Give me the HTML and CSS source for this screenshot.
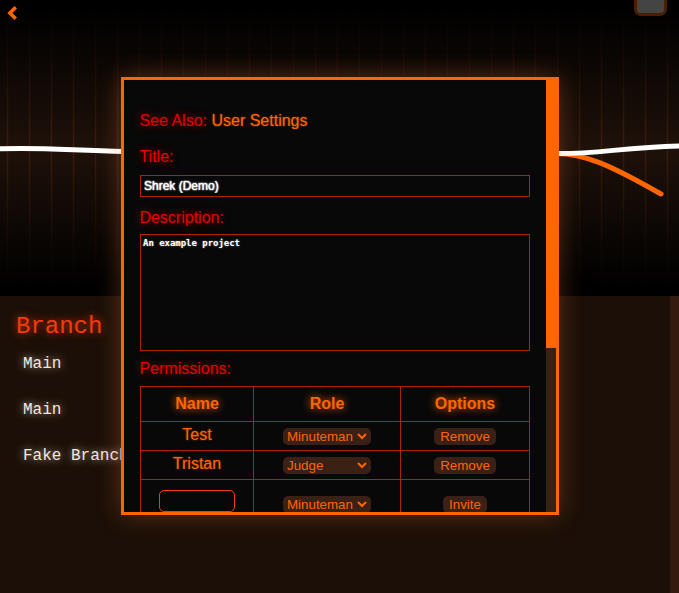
FILE: index.html
```html
<!DOCTYPE html>
<html lang="en">
<head>
<meta charset="utf-8">
<title>Project Settings</title>
<link rel="stylesheet" href="styles.css">
</head>
<body>
<main class="page">
  <section class="timeline">
    <svg class="tracks" width="679" height="296" viewBox="0 0 679 296" fill="none" stroke-linecap="round">
      <path d="M555 153.500C585 153.500 610 165 661 194" stroke="#f60" stroke-width="5"/>
      <path d="M-3 149C35 147 65 150 125 151.500M555 153.500C595 154.500 625 147 682 146" stroke="#fff" stroke-width="5"/>
    </svg>
    <svg class="back" width="12" height="16" viewBox="0 0 12 16" fill="none"><path d="M9.700 2.200 3.900 8l5.800 5.800" stroke="#f60" stroke-width="3.600"/></svg>
    <div class="avatar"></div>
  </section>
  <section class="branches">
    <h2>Branch</h2>
    <p>Main</p>
    <p>Main</p>
    <p>Fake Branch</p>
  </section>
</main>
<div class="dialog">
  <div class="content">
    <p class="label see">See Also: <a>User Settings</a></p>
    <label class="label">Title:</label>
    <input class="title" value="Shrek (Demo)">
    <label class="label desc">Description:</label>
    <textarea class="text" spellcheck="false">An example project</textarea>
    <label class="label perm">Permissions:</label>
    <div class="grid">
      <div class="cell head">Name</div><div class="cell head">Role</div><div class="cell head">Options</div>
      <div class="cell">Test</div>
      <div class="cell"><span class="select">Minuteman<svg width="10" height="7" viewBox="0 0 10 7"><path d="m1 1 4 4 4-4"/></svg></span></div>
      <div class="cell"><button>Remove</button></div>
      <div class="cell">Tristan</div>
      <div class="cell"><span class="select">Judge<svg width="10" height="7" viewBox="0 0 10 7"><path d="m1 1 4 4 4-4"/></svg></span></div>
      <div class="cell"><button>Remove</button></div>
      <div class="cell last"><input class="invite"></div>
      <div class="cell last"><span class="select">Minuteman<svg width="10" height="7" viewBox="0 0 10 7"><path d="m1 1 4 4 4-4"/></svg></span></div>
      <div class="cell last"><button>Invite</button></div>
    </div>
  </div>
  <div class="scrollbar"><div class="thumb"></div></div>
</div>
</body>
</html>
```
FILE: styles.css
```css
* { box-sizing: border-box; }
body {
  margin: 0;
  height: 593px;
  overflow: hidden;
  background: #1b0f07;
  font: 16px/18px "Liberation Sans", Arial, sans-serif;
}
p, h2 { margin: 0; }
.page { height: 593px; display: flex; flex-direction: column; }
.timeline {
  position: relative;
  height: 296px;
  flex: none;
  background:
    linear-gradient(#000 3%, transparent 50%, #000 97%),
    repeating-linear-gradient(90deg, transparent 0 6px, #25130a 6px 7px, #3a1d0e 7px 8px, #25130a 8px 9px, transparent 9px 22px),
    #1e1109;
}
.tracks { display: block; }
.back { position: absolute; left: 6px; top: 5px; }
.avatar {
  position: absolute;
  left: 634px;
  top: -17px;
  width: 33px;
  height: 33px;
  border: 3px solid #4b1e02;
  border-radius: 7px;
  background: #444;
}
.branches {
  flex: 1;
  padding: 17px 0 0 23px;
  border-right: 9px solid #351b0f;
  font-family: "Courier New", "Liberation Mono", monospace;
  color: #f5e6dd;
  text-shadow: 0 0 8px rgba(255, 230, 210, .75);
}
.branches h2 {
  margin-left: -7px;
  font-size: 24px;
  line-height: 28px;
  color: #f73b08;
  text-shadow: 0 0 8px #e63600;
}
.branches h2, .branches p { font-weight: 400; }
.branches p { height: 46px; line-height: 46px; }
.dialog {
  position: absolute;
  left: 121px;
  top: 77px;
  width: 438px;
  height: 438px;
  display: flex;
  overflow: hidden;
  border: 3px solid #f60;
  background: #080808;
  box-shadow: 0 0 24px rgba(255, 130, 65, .3);
}
.content { width: 422px; height: 432px; padding: 32px 16px 0; overflow: hidden; }
.scrollbar { width: 10px; background: #3a2015; }
.thumb { height: 268px; background: #f60; }
.label { display: block; text-indent: -.6px; color: #e60000; text-shadow: 0 0 8px rgba(220, 0, 0, .75); }
.see { margin-bottom: 18px; }
.see a { color: #f60; text-shadow: 0 0 2px rgba(255, 102, 0, .6); }
.title {
  display: block;
  width: 390px;
  height: 22px;
  margin: 9px 0 12px;
  padding: 0 3px;
  border: 1px solid #a92506;
  background: transparent;
  color: #fff;
  font: 12px "Liberation Sans", Arial, sans-serif;
  text-shadow: 0 0 2px #fff, 0 0 1px #fff;
}
.text {
  display: block;
  width: 390px;
  height: 117px;
  margin: 7px 0 9px;
  padding: 2px;
  resize: none;
  border: 1px solid #a92506;
  background: transparent;
  color: #fff;
  font: bold 9px/12px "DejaVu Sans Mono", monospace;
  letter-spacing: -.03px;
  text-shadow: 0 0 2px #888;
}
.perm { margin-bottom: 8px; }
.grid {
  display: grid;
  width: 390px;
  grid-template-columns: 113px 147px 129px;
  grid-template-rows: 35px 29px 29px 46px;
  border: solid #a92506;
  border-width: 1px 0 0 1px;
}
.cell {
  display: flex;
  justify-content: center;
  align-items: center;
  padding-bottom: 2px;
  border: solid #a92506;
  border-width: 0 1px 1px 0;
  color: #f60;
  text-shadow: 0 0 2px rgba(255, 102, 0, .6);
}
.head { padding: 0; font-weight: 700; text-shadow: 0 0 8px #f60; }
.select, button {
  height: 17px;
  margin-top: 3px;
  border: 0;
  border-radius: 5px;
  background: #3a2015;
  color: #f60;
  font: 13.333px/17px "Liberation Sans", Arial, sans-serif;
}
.select, .cell button { text-shadow: none; }
button { padding: 0 6px; }
.select {
  width: 88px;
  padding: 0 4px;
  display: flex;
  justify-content: space-between;
  align-items: center;
}
.select svg { fill: none; stroke: #f60; stroke-width: 2; }
.invite {
  width: 76px;
  height: 22px;
  margin-bottom: 3px;
  border: 1px solid #f33b08;
  border-radius: 5px;
  background: transparent;
}
.last { padding: 0; }
```
